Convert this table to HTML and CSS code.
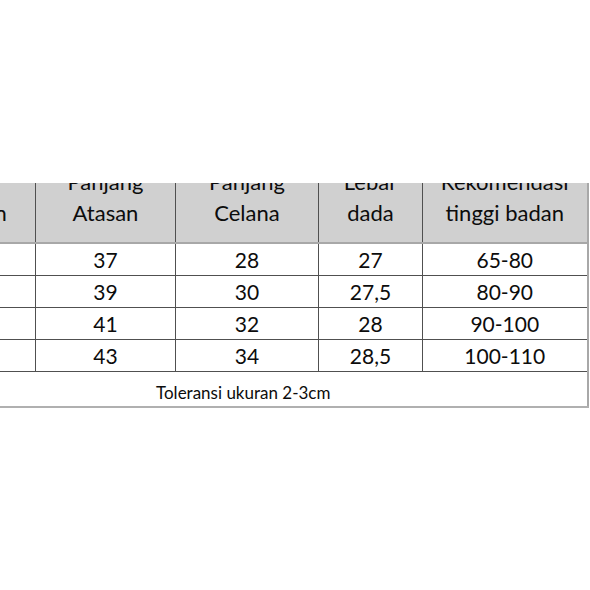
FILE: index.html
```html
<!DOCTYPE html>
<html>
<head>
<meta charset="utf-8">
<link rel="stylesheet" href="styles.css">
</head>
<body>
<div class="page">
  <table class="size-table">
    <colgroup>
      <col class="c0"><col class="c1"><col class="c2"><col class="c3"><col class="c4">
    </colgroup>
    <thead>
      <tr>
        <th><div class="hd">Ukuran</div></th>
        <th><div class="hd">Panjang<br>Atasan</div></th>
        <th><div class="hd">Panjang<br>Celana</div></th>
        <th><div class="hd">Lebar<br>dada</div></th>
        <th><div class="hd">Rekomendasi<br>tinggi badan</div></th>
      </tr>
    </thead>
    <tbody>
      <tr><td>S</td><td>37</td><td>28</td><td>27</td><td>65-80</td></tr>
      <tr><td>M</td><td>39</td><td>30</td><td>27,5</td><td>80-90</td></tr>
      <tr><td>L</td><td>41</td><td>32</td><td>28</td><td>90-100</td></tr>
      <tr><td>XL</td><td>43</td><td>34</td><td>28,5</td><td>100-110</td></tr>
      <tr class="foot"><td colspan="5">Toleransi ukuran 2-3cm</td></tr>
    </tbody>
  </table>
</div>
</body>
</html>
```

FILE: styles.css
```css
html, body {
  margin: 0;
  padding: 0;
  background: #ffffff;
}
.page {
  padding-top: 183px;
  width: 590px;
  height: 590px;
  box-sizing: border-box;
  overflow: hidden;
}
.size-table {
  margin-left: -93px;
  border-collapse: collapse;
  table-layout: fixed;
  width: 681px;
  font-family: Lato, "Liberation Sans", sans-serif;
  color: #0c0c0c;
}
.c0 { width: 128px; }
.c1 { width: 140px; }
.c2 { width: 143px; }
.c3 { width: 104px; }
.c4 { width: 165px; }
.size-table th {
  background: #d0d0d0;
  font-weight: 400;
  font-size: 22px;
  padding: 0;
  border-left: 1px solid #505050;
  border-bottom: 2px solid #a8a8a8;
  vertical-align: bottom;
}
.size-table th:last-child {
  border-right: 2px solid #a8a8a8;
}
.hd {
  height: 59px;
  overflow: hidden;
  display: flex;
  flex-direction: column;
  justify-content: flex-end;
  line-height: 31px;
  padding-bottom: 14px;
  box-sizing: border-box;
  text-align: center;
}
.size-table td {
  border-left: 1px solid #505050;
  border-bottom: 1px solid #505050;
  font-size: 21px;
  text-align: center;
  padding: 0;
  height: 31px;
  line-height: 31px;
}
.size-table td:last-child {
  border-right: 2px solid #a8a8a8;
}
.size-table tr.foot td {
  font-size: 17px;
  height: 31px;
  line-height: 20px;
  padding: 0 8px 3px 0;
  vertical-align: bottom;
  border-bottom: 2px solid #b0b0b0;
  border-right: 2px solid #a8a8a8;
}
```
